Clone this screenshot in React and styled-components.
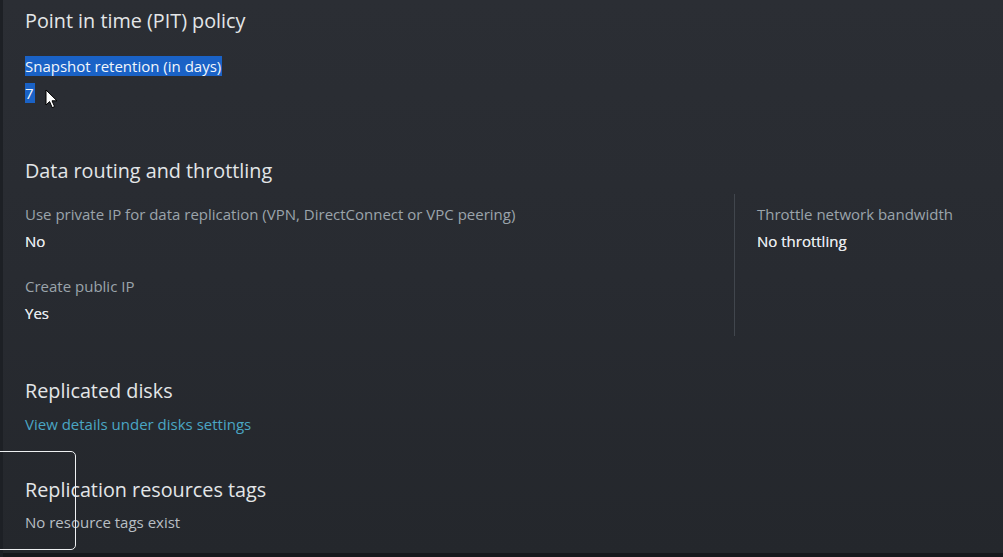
import React from "react";
import styled, { createGlobalStyle } from "styled-components";

const GlobalStyle = createGlobalStyle`
  html, body {
    margin: 0;
    padding: 0;
    background: #16181c;
  }
  body {
    font-family: "Open Sans", "Liberation Sans", Arial, sans-serif;
  }
`;

const Page = styled.div`
  position: relative;
  width: 1003px;
  height: 557px;
  overflow: hidden;
  display: flex;
  background: #16181c;
`;

const Strip = styled.div`
  width: 3px;
  flex: none;
  background: #1d2025;
`;

const Main = styled.div`
  flex: 1;
  height: 553px;
  background: linear-gradient(180deg, #2b2e34 0%, #282b31 50%, #24272c 100%);
  padding: 10px 0 0 22px;
  box-sizing: border-box;
`;

const Section = styled.section`
  margin-top: ${(p) => p.$top || 0}px;
`;

const Heading = styled.h2`
  margin: 0;
  font-size: 19.8px;
  line-height: 22px;
  font-weight: 400;
  color: #e3e6e8;
`;

const Pair = styled.div`
  display: flex;
  flex-direction: column;
  gap: 7px;
  margin-top: ${(p) => p.$top || 0}px;
`;

const Label = styled.div`
  font-size: 15px;
  line-height: 20px;
  color: #9ba4ab;
`;

const Value = styled.div`
  font-size: 15px;
  line-height: 20px;
  color: #e4e7ea;
  font-weight: 400;
  ${(p) => !p.$light && "text-shadow: 0 0 0.4px #e4e7ea;"}
  ${(p) => p.$muted && "color: #b8bfc4;"}
`;

const Selected = styled.span`
  background: #1a62c6;
  color: #f2f6fb;
  padding: 0 1px 0 0;
`;

const Columns = styled.div`
  display: grid;
  grid-template-columns: 709px 1fr;
  margin-top: 12px;
`;

const Column = styled.div`
  display: flex;
  flex-direction: column;
  gap: 25px;
  padding: 10px 0 13px;
  ${(p) => p.$divided && "border-left: 1px solid #41464d; padding-left: 22px;"}
`;

const Link = styled.a`
  display: block;
  margin-top: 12px;
  font-size: 15px;
  line-height: 20px;
  color: #4aa6c4;
  text-decoration: none;
`;

const Cursor = styled.svg`
  position: absolute;
  left: 45px;
  top: 89px;
`;

const FocusBox = styled.div`
  position: absolute;
  left: -6px;
  top: 451px;
  width: 80px;
  height: 97px;
  border: 1.5px solid #eef0f2;
  border-radius: 5px;
  pointer-events: none;
`;

export default function App() {
  return (
    <>
      <GlobalStyle />
      <Page>
        <Strip />
        <Main>
          <Section>
            <Heading>Point in time (PIT) policy</Heading>
            <Pair $top={24}>
              <Label>
                <Selected>Snapshot retention (in days)</Selected>
              </Label>
              <Value $light>
                <Selected>7</Selected>
              </Value>
            </Pair>
          </Section>

          <Section $top={57}>
            <Heading>Data routing and throttling</Heading>
            <Columns>
              <Column>
                <Pair>
                  <Label>Use private IP for data replication (VPN, DirectConnect or VPC peering)</Label>
                  <Value>No</Value>
                </Pair>
                <Pair>
                  <Label>Create public IP</Label>
                  <Value>Yes</Value>
                </Pair>
              </Column>
              <Column $divided>
                <Pair>
                  <Label>Throttle network bandwidth</Label>
                  <Value>No throttling</Value>
                </Pair>
              </Column>
            </Columns>
          </Section>

          <Section $top={44}>
            <Heading>Replicated disks</Heading>
            <Link href="#">View details under disks settings</Link>
          </Section>

          <Section $top={45}>
            <Heading>Replication resources tags</Heading>
            <Pair $top={11}>
              <Value $light $muted>No resource tags exist</Value>
            </Pair>
          </Section>
        </Main>
        <FocusBox />
        <Cursor width="13" height="20" viewBox="0 0 13 20">
          <path
            d="M1 1 L1 16 L4.6 12.6 L7.2 18.6 L9.6 17.6 L7 11.8 L12 11.8 Z"
            fill="#ffffff"
            stroke="#000000"
            strokeWidth="1"
            strokeLinejoin="round"
          />
        </Cursor>
      </Page>
    </>
  );
}
